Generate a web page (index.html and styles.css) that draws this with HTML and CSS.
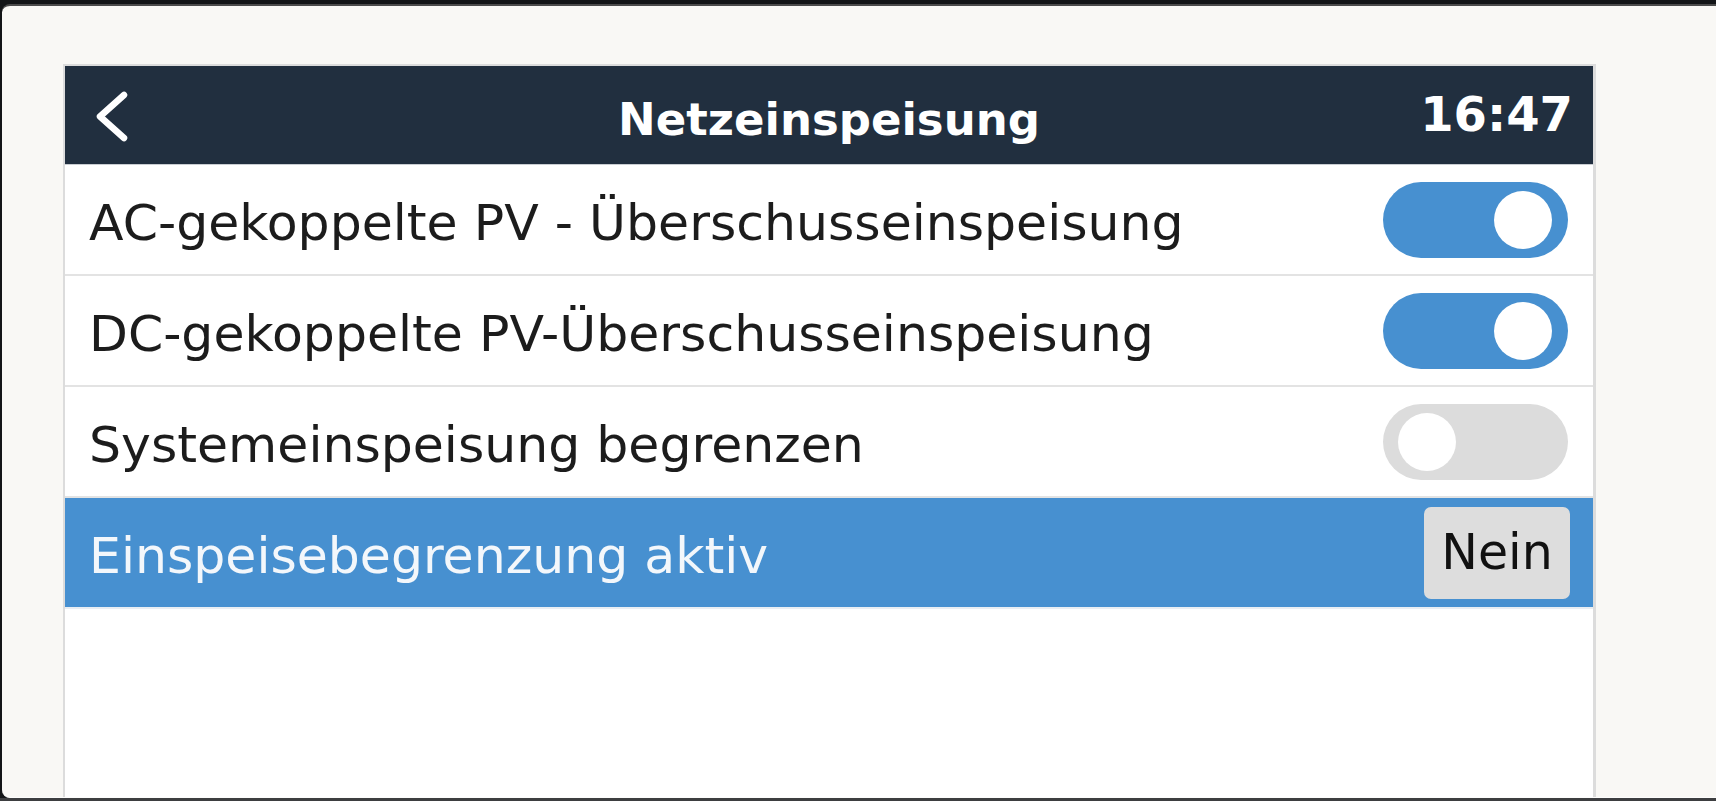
FILE: index.html
```html
<!DOCTYPE html>
<html lang="de">
<head>
  <meta charset="UTF-8" />
  <meta name="viewport" content="width=device-width, initial-scale=1.0" />
  <title>Netzeinspeisung</title>
  <link rel="stylesheet" href="styles.css">
</head>
<body>
  <div class="frame">
    <div class="panel">
      <div class="header">
        <div class="back">
          <svg width="36" height="60" viewBox="0 0 36 60">
            <path d="M30 8 L6 29.5 L30 51" fill="none" stroke="#ffffff" stroke-width="6.5" stroke-linecap="round" stroke-linejoin="round"/>
          </svg>
        </div>
        <div class="title">Netzeinspeisung</div>
        <div class="clock">16:47</div>
      </div>

      <div class="row">
        <span>AC-gekoppelte PV - Überschusseinspeisung</span>
        <span class="toggle on"><span class="knob"></span></span>
      </div>
      <div class="row">
        <span>DC-gekoppelte PV-Überschusseinspeisung</span>
        <span class="toggle on"><span class="knob"></span></span>
      </div>
      <div class="row">
        <span>Systemeinspeisung begrenzen</span>
        <span class="toggle"><span class="knob"></span></span>
      </div>
      <div class="row selected">
        <span>Einspeisebegrenzung aktiv</span>
        <span class="value">Nein</span>
      </div>
    </div>
  </div>
  <div class="bottom-bar"></div>
</body>
</html>
```

FILE: styles.css
```css
body {
  margin: 0;
  background: #131517;
  font-family: "DejaVu Sans", "Noto Sans", sans-serif;
  height: 801px;
  overflow: hidden;
}

.frame {
  box-sizing: border-box;
  height: 794px;
  margin: 4px 0 0 2px;
  padding: 58px 0 0 61px;
  background: #f9f8f5;
  border-top: 2px solid #4b4b4b;
  border-bottom: 1px solid #fdfdfc;
  border-radius: 8px 0 0 8px;
  overflow: hidden;
}
.bottom-bar {
  height: 3px;
  background: #3d3e40;
}

.panel {
  width: 1528px;
  height: 760px;
  background: #ffffff;
  border: 2px solid #dcdcdc;
  border-right-width: 3px;
  border-bottom: none;
}

.header {
  height: 98px;
  background: #212f3f;
  border-bottom: 1px solid #c9cdd2;
  color: #ffffff;
  display: grid;
  grid-template-columns: 1fr auto 1fr;
  align-items: center;
  padding: 0 20px;
}
.back {
  display: flex;
  align-items: center;
  padding-left: 9px;
  margin-top: 3px;
}
.title {
  font-size: 45px;
  font-weight: bold;
  margin-top: 8px;
}
.clock {
  justify-self: end;
  font-size: 48px;
  font-weight: bold;
  margin-top: -2px;
}

.row {
  height: 109px;
  border-bottom: 2px solid #e3e3e3;
  display: flex;
  align-items: center;
  justify-content: space-between;
  padding: 0 25px 0 24px;
  font-size: 50.5px;
  color: #1c1c1c;
}
.row > span:first-child {
  margin-top: 5px;
}
.row.selected {
  background: #4790d0;
  color: #f3f7fb;
  padding-right: 23px;
  border-bottom-color: #e9eef3;
}

.toggle {
  box-sizing: border-box;
  width: 185px;
  height: 76px;
  border-radius: 38px;
  background: #dcdcdc;
  display: flex;
  align-items: center;
  padding: 0 16px 0 15px;
}
.toggle.on {
  background: #4790d0;
  justify-content: flex-end;
}
.knob {
  width: 58px;
  height: 58px;
  border-radius: 50%;
  background: #ffffff;
}

.value {
  width: 146px;
  height: 92px;
  border-radius: 7px;
  background: #dddddd;
  color: #111111;
  font-size: 49px;
  display: flex;
  align-items: center;
  justify-content: center;
}
```
